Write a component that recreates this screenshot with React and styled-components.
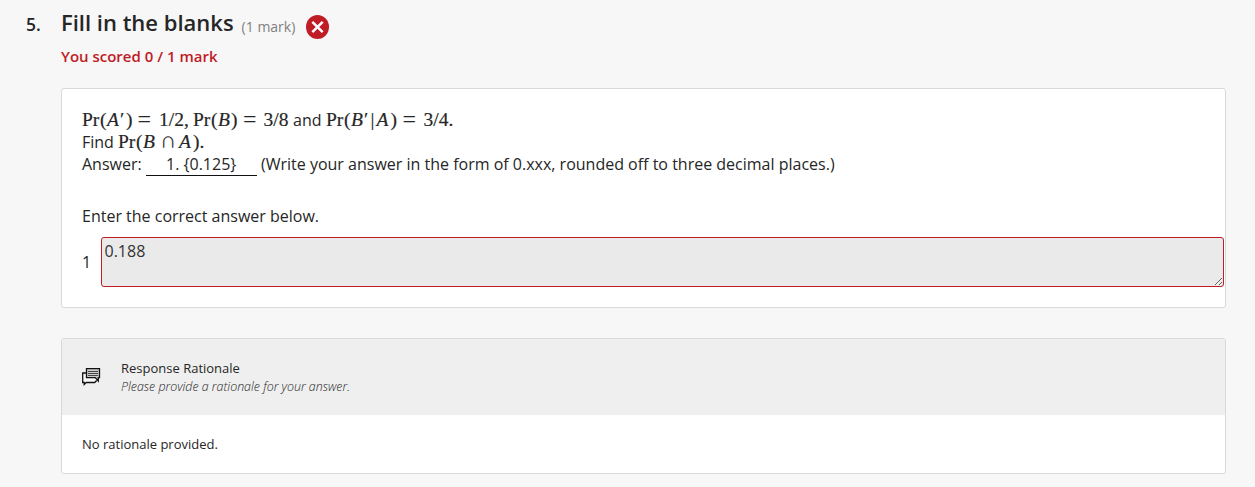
import React from "react";
import styled, { createGlobalStyle } from "styled-components";

const GlobalStyle = createGlobalStyle`
  * { box-sizing: border-box; }
  body {
    margin: 0;
    background: #f7f7f7;
    color: #262626;
    font-family: "Open Sans", "Noto Sans", sans-serif;
  }
`;

const Page = styled.main`
  display: flex;
  height: 487px;
  padding: 0 29px 0 26px;
  overflow: hidden;
`;

const Number = styled.div`
  flex: 0 0 35px;
  padding-top: 11px;
  font-size: 17.5px;
  line-height: 26px;
  font-weight: 600;
`;

const Question = styled.section`
  flex: 1;
  min-width: 0;
`;

const Heading = styled.header`
  display: flex;
  align-items: baseline;
  height: 46px;
  padding-top: 6px;
`;

const Title = styled.h1`
  margin: 0;
  font-size: 22px;
  line-height: 32px;
  font-weight: 600;
  white-space: nowrap;
`;

const Marks = styled.span`
  position: relative;
  top: 1px;
  margin-left: 8px;
  color: #808080;
  font-size: 14px;
  white-space: nowrap;
`;

const WrongIcon = styled.svg`
  align-self: flex-start;
  margin: 9px 0 0 10.5px;
`;

const Score = styled.p`
  margin: 0;
  height: 42px;
  color: #c01c26;
  font-size: 15px;
  line-height: 20px;
  font-weight: 600;
`;

const Card = styled.div`
  height: ${(p) => p.$height}px;
  margin-bottom: 30px;
  border: 1px solid #d9d9d9;
  border-radius: 3px;
  background: #fff;
  overflow: hidden;
`;

const Prompt = styled.div`
  padding: 20px 0 0 20px;
  font-size: 16px;
`;

const Line = styled.div`
  display: flex;
  align-items: baseline;
  height: 22px;
  line-height: 22px;
  white-space: pre;
`;

const Sym = styled.span`
  flex: 0 0 ${(p) => p.$w}px;
  font-family: "Liberation Serif", serif;
  font-size: 19.5px;
  font-style: ${(p) => (p.$italic ? "italic" : "normal")};
  -webkit-text-stroke: 0.2px currentColor;
`;

const Operator = styled.span`
  position: relative;
  top: 1px;
  flex: 0 0 ${(p) => p.$w}px;
  font-family: "Liberation Serif", serif;
  font-size: 24px;
  line-height: 16px;
  text-indent: -1px;
`;

const SetOperator = styled.span`
  flex: 0 0 ${(p) => p.$w}px;
  font-family: "Liberation Serif", serif;
  font-size: 23px;
  line-height: 16px;
  text-indent: -1px;
`;

const Words = styled.span`
  flex: 0 0 auto;
  width: ${(p) => (p.$w ? p.$w + "px" : "auto")};
`;

const Blank = styled.span`
  align-self: flex-start;
  width: 111px;
  height: 23px;
  margin: 0 4px 0 0;
  padding-left: 20px;
  border-bottom: 1px solid #111;
`;

const Instruction = styled.p`
  margin: 30px 0 0;
  line-height: 22px;
`;

const AnswerRow = styled.div`
  display: flex;
  align-items: center;
  margin: 10px 1px 0 20px;
`;

const AnswerIndex = styled.label`
  flex: 0 0 19px;
  font-size: 16px;
  line-height: 22px;
`;

const AnswerBox = styled.textarea`
  flex: 1;
  height: 50px;
  margin: 0;
  padding: 2px 2px 2px 2.5px;
  border: 1px solid #c01c26;
  border-radius: 3px;
  background: #eaeaea;
  color: #333;
  font: 16px/22px "Open Sans", sans-serif;
  resize: vertical;
  outline: none;
`;

const RationaleHead = styled.div`
  display: flex;
  align-items: center;
  height: 76px;
  padding-left: 19px;
  background: #efefef;
`;

const RationaleText = styled.div`
  margin-left: 20px;
  font-size: 13px;
  line-height: 18px;
`;

const Hint = styled.div`
  font-size: 12.4px;
  line-height: 19px;
  margin-bottom: -1px;
  font-style: italic;
  font-weight: 300;
`;

const RationaleBody = styled.p`
  margin: 20px 0 0 20px;
  font-size: 13px;
  line-height: 18px;
`;

const MathRow = ({ items }) =>
  items.map(([text, w, kind], i) => {
    if (kind === "words") return <Words key={i} $w={w}>{text}</Words>;
    if (kind === "op") return <Operator key={i} $w={w}>{text}</Operator>;
    if (kind === "set") return <SetOperator key={i} $w={w}>{text}</SetOperator>;
    return <Sym key={i} $w={w} $italic={kind === "i"}>{text}</Sym>;
  });

const given = [
  ["Pr", 18], ["(", 7], ["A", 13, "i"], ["′", 6], [")", 12.5],
  ["=", 20.5, "op"], ["1/2,", 34], ["Pr", 18], ["(", 7], ["B", 13, "i"],
  [")", 13], ["=", 19.5, "op"], ["3/8", 29.5], ["and", 33, "words"],
  ["Pr", 18], ["(", 7], ["B", 13, "i"], ["′", 6.5], ["|", 6],
  ["A", 14, "i"], [")", 13], ["=", 20, "op"], ["3/4.", 34],
];

const find = [
  ["Find", 36, "words"], ["Pr", 18], ["(", 7], ["B", 18, "i"],
  ["∩", 18, "set"], ["A", 14, "i"], [").", 12],
];

const ChatIcon = () => (
  <svg width="20" height="20" viewBox="0 0 20 20" fill="none">
    <path d="M5 6H1.7v9.5h1.5v2l2-2h8.5l2-2" fill="#f7f7f7" stroke="#111" strokeWidth="1.3" />
    <path d="M5.5 1.6h13v9h-1.2V14l-3-3.4H5.5Z" fill="#ccc" stroke="#111" strokeWidth="1.3" />
    <path d="M7 4.5h10M7 6.5h10M7 8.5h10" stroke="#222" strokeWidth=".8" />
  </svg>
);

export default function App() {
  return (
    <>
      <GlobalStyle />
      <Page>
        <Number>5.</Number>
        <Question>
          <Heading>
            <Title>Fill in the blanks</Title>
            <Marks>(1 mark)</Marks>
            <WrongIcon width="23" height="24" viewBox="0 0 23 24">
              <ellipse cx="11.5" cy="12" rx="11.5" ry="12" fill="#c01c26" />
              <path d="m6.3 6.8 10.4 10.4m0-10.4L6.3 17.2" stroke="#fff" strokeWidth="2.5" />
            </WrongIcon>
          </Heading>
          <Score>You scored 0 / 1 mark</Score>
          <Card $height={220}>
            <Prompt>
              <Line><MathRow items={given} /></Line>
              <Line><MathRow items={find} /></Line>
              <Line>
                <Words $w={64}>Answer:</Words>
                <Blank>1. {"{0.125}"}</Blank>
                <Words>(Write your answer in the form of 0.xxx, rounded off to three decimal places.)</Words>
              </Line>
              <Instruction>Enter the correct answer below.</Instruction>
            </Prompt>
            <AnswerRow>
              <AnswerIndex htmlFor="answer-1">1</AnswerIndex>
              <AnswerBox id="answer-1" readOnly value="0.188" />
            </AnswerRow>
          </Card>
          <Card $height={136}>
            <RationaleHead>
              <ChatIcon />
              <RationaleText>
                Response Rationale
                <Hint>Please provide a rationale for your answer.</Hint>
              </RationaleText>
            </RationaleHead>
            <RationaleBody>No rationale provided.</RationaleBody>
          </Card>
        </Question>
      </Page>
    </>
  );
}
